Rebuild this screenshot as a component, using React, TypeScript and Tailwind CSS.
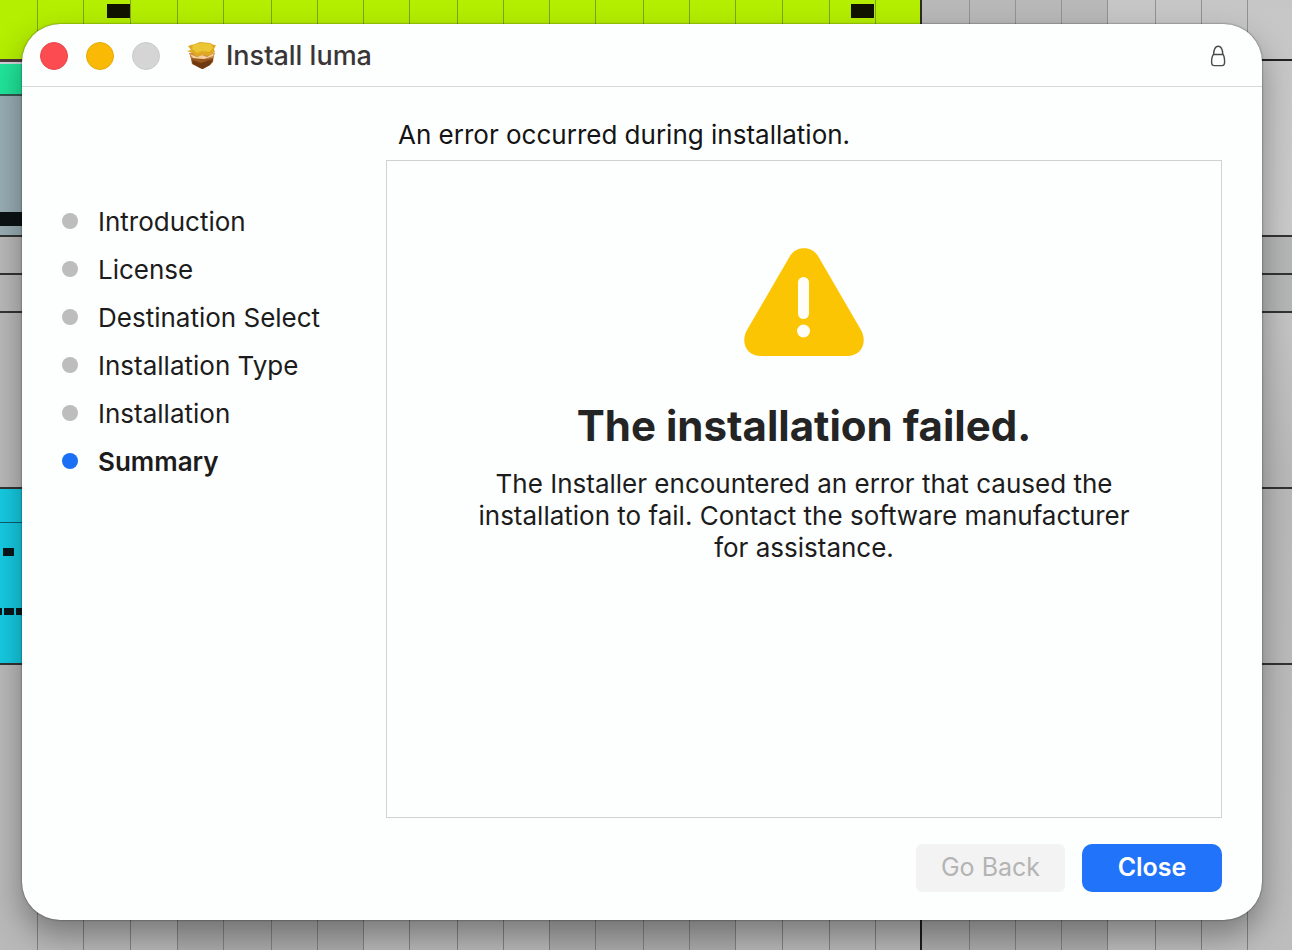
import React from "react";
import clsx from "clsx";

const steps = [
  "Introduction",
  "License",
  "Destination Select",
  "Installation Type",
  "Installation",
  "Summary",
];

const beats = [
  37, 83, 130, 177, 223, 271, 317, 363, 409, 457, 503, 549, 595, 643, 689, 735,
  782, 829, 875, 921, 969, 1015, 1061, 1107, 1155, 1201, 1247,
];

// Music timeline that shows behind the window
function Timeline() {
  return (
    <svg
      className="absolute inset-0 h-full w-full"
      viewBox="0 0 1292 950"
      preserveAspectRatio="none"
      aria-hidden="true"
    >
      <defs>
        <linearGradient id="right" x1="0" y1="0" x2="0" y2="1">
          <stop offset="0" stopColor="#c6c6c6" />
          <stop offset="0.24" stopColor="#cacaca" />
          <stop offset="0.5" stopColor="#b9b9b9" />
          <stop offset="1" stopColor="#bdbdbd" />
        </linearGradient>
      </defs>
      <rect width="1292" height="950" fill="#b9b9b9" />
      <rect x="921" width="371" height="950" fill="url(#right)" />
      <rect x="921" width="186" height="60" fill="#b8b8b8" />
      <rect x="1250" y="237" width="42" height="74" fill="#b5b7b6" />

      <rect width="921" height="59" fill="#b4ee00" />
      <rect y="59" width="40" height="3" fill="#4a3a38" />
      <rect y="62" width="40" height="2" fill="#d0d4d8" />
      <rect y="64" width="40" height="31" fill="#20e59a" />
      <rect y="95" width="40" height="117" fill="#98adb4" />
      <rect y="94" width="40" height="2" fill="#36564f" />
      <rect y="212" width="40" height="14" fill="#0c1214" />
      <rect y="226" width="40" height="9" fill="#98adb4" />

      <rect y="489" width="40" height="174" fill="#16cbe2" />
      <rect y="522" width="40" height="1" fill="#0b5f70" />
      <rect x="3" y="548" width="11" height="8" fill="#08171b" />
      <rect y="608" width="2" height="7" fill="#08171b" />
      <rect x="4" y="608" width="10" height="7" fill="#08171b" />
      <rect x="16" y="608" width="10" height="7" fill="#08171b" />

      {[236, 274, 312, 488, 664].map((y) => (
        <rect key={y} y={y - 1} width="1292" height="2" fill="#333333" />
      ))}
      <rect x="1240" y="59" width="52" height="2" fill="#222222" />

      <rect x="177" y="900" width="186" height="50" fill="#adadad" />
      <rect x="549" y="900" width="186" height="50" fill="#adadad" />
      <rect x="921" y="900" width="186" height="50" fill="#adadad" />
      {beats.map((x) => (
        <g key={x}>
          <rect
            x={x}
            width="1"
            height="40"
            fill={x < 921 ? "#7fa514" : "#929292"}
          />
          <rect x={x} y="890" width="1" height="60" fill="#808086" />
        </g>
      ))}
      <rect x="920" width="2" height="40" fill="#2b2b22" />
      <rect x="920" y="890" width="2" height="60" fill="#1c1c1c" />
      <rect x="107" y="4" width="23" height="14" fill="#111400" />
      <rect x="851" y="4" width="23" height="14" fill="#111400" />
    </svg>
  );
}

function PackageIcon() {
  return (
    <svg className="h-8 w-8" viewBox="0 0 32 32" aria-hidden="true">
      <path d="M4 14 L28 14 L27 22 L24 25 L16 29 L6 24 Z" fill="#9a581f" />
      <path d="M6 20 L15 23 L27 19 L24 25 L17 29 L14 28 L7 24 Z" fill="#6f3a12" />
      <path d="M3 13 L29 13 L27 18 L17 19 L5 18 Z" fill="#c98442" />
      <path d="M4 14 L11 17 L16 15 L21 17 L28 13 L27 16 L18 19 L7 18 Z" fill="#f2cfa0" />
      <path
        d="M5 5 L9 4 L14 2 L24 3 L28 5 L30 5 L28 9 L29 12 L23 16 L16 15 L11 17 L6 13 L1 11 L5 10 L2 6 Z"
        fill="#dfa925"
      />
      <path d="M7 5 L15 3 L25 4 L27 8 L23 12 L16 11 L11 13 L6 9 Z" fill="#ebc635" />
    </svg>
  );
}

function LockIcon() {
  return (
    <svg
      className="h-6 w-4"
      viewBox="0 0 16 24"
      fill="none"
      stroke="#4a4a4a"
      strokeWidth="1.4"
      aria-hidden="true"
    >
      <path d="M3.6 10.5 C3.8 5 5.4 2.2 8.2 2.2 C11 2.2 12.6 5 12.8 10.5" />
      <path d="M3.4 10.5 H13 C14.2 12 14.6 15 14.6 18 C14.6 20.5 13.8 21.6 12 21.6 H4.2 C2.4 21.6 1.6 20.5 1.6 18 C1.6 15 2.2 12 3.4 10.5 Z" />
    </svg>
  );
}

function WarningIcon() {
  return (
    <svg className="h-27 w-30" viewBox="0 0 120 108" aria-hidden="true">
      <path
        d="M46 8 C52 -2.5 68 -2.5 74 8 L117 82 C124 95 117 108 103 108 H17 C3 108 -4 95 3 82 Z"
        fill="#fcc503"
      />
      <rect x="54" y="29" width="11" height="42" rx="5.5" fill="#fffdf8" />
      <circle cx="59.5" cy="83" r="6.5" fill="#fffdf8" />
    </svg>
  );
}

export default function App() {
  return (
    <div className="relative flex min-h-screen overflow-hidden pt-6 pr-[30px] pb-[30px] pl-[22px] font-[Inter,sans-serif] text-[#1c1c1c]">
      <Timeline />
      <div className="relative flex flex-1 flex-col rounded-[38px] bg-[#fdfefe] shadow-[0_0_2px_rgba(0,0,0,0.6),0_16px_32px_rgba(0,0,0,0.35)]">
        <header className="flex h-[63px] items-center border-b border-[#d6d9d9] px-[18px] pt-[2px]">
          <div className="flex gap-[18px]">
            <button
              aria-label="Close window"
              className="size-7 rounded-full border border-[#e5454a] bg-[#fc4c51]"
            />
            <button
              aria-label="Minimize window"
              className="size-7 rounded-full border border-[#e5ac08] bg-[#f9b905]"
            />
            <button
              aria-label="Zoom window"
              disabled
              className="size-7 rounded-full border border-[#cbcbcb] bg-[#d5d5d5]"
            />
          </div>
          <div className="ml-[26px] flex flex-1 items-center gap-2">
            <PackageIcon />
            <h1 className="text-[27px] leading-8 font-medium text-[#3a3638]">
              Install luma
            </h1>
          </div>
          <button aria-label="Lock" className="mr-[18px]">
            <LockIcon />
          </button>
        </header>

        <div className="flex flex-1">
          <nav className="w-[364px] shrink-0 pt-[110px] pl-10">
            <ol>
              {steps.map((step) => {
                const current = step === "Summary";
                return (
                  <li
                    key={step}
                    aria-current={current ? "step" : undefined}
                    className={clsx(
                      "flex h-12 items-center gap-5 text-[26px]",
                      current && "font-semibold"
                    )}
                  >
                    <span
                      className={clsx(
                        "size-4 rounded-full",
                        current ? "bg-[#1a6ff5]" : "bg-[#bdbdbd]"
                      )}
                    />
                    {step}
                  </li>
                );
              })}
            </ol>
          </nav>

          <main className="flex flex-1 flex-col pt-8 pr-10 pb-7">
            <h2 className="mb-[9px] pl-3 text-[26px] leading-8 text-[#141414]">
              An error occurred during installation.
            </h2>
            <section className="flex flex-1 flex-col items-center border border-[#cdd2d4] px-20 pt-[87px] text-center">
              <WarningIcon />
              <h3 className="mt-11 text-[42px] leading-[52px] font-bold text-[#242424]">
                The installation failed.
              </h3>
              <p className="mt-4 max-w-[660px] text-[26px] leading-8">
                The Installer encountered an error that caused the installation
                to fail. Contact the software manufacturer for assistance.
              </p>
            </section>
            <div className="mt-[26px] flex justify-end gap-[17px]">
              <button
                disabled
                className="h-12 w-[149px] rounded-md bg-[#f3f3f3] text-[25px] text-[#b4b4b4]"
              >
                Go Back
              </button>
              <button className="h-12 w-[140px] rounded-[10px] bg-[#2173fa] text-[25px] font-semibold text-white">
                Close
              </button>
            </div>
          </main>
        </div>
      </div>
    </div>
  );
}
